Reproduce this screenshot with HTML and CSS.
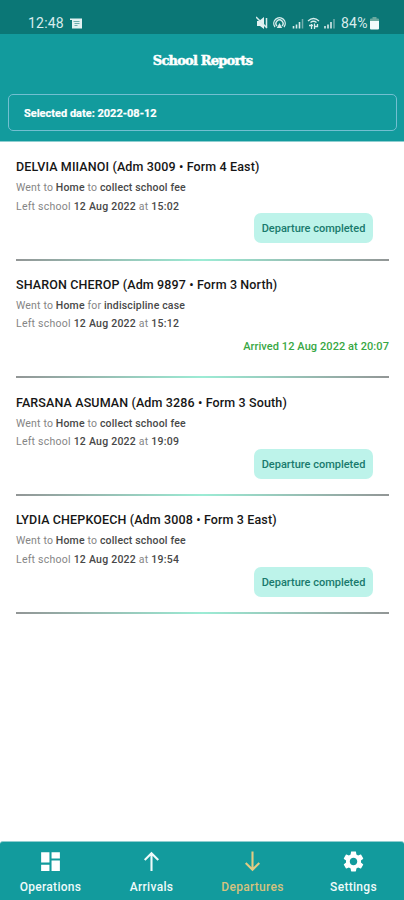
FILE: index.html
```html
<!DOCTYPE html>
<html lang="en">
<head>
<meta charset="utf-8">
<title>School Reports</title>
<link rel="stylesheet" href="styles.css">
</head>
<body>
<div class="app">
  <div class="status">
    <span class="time">12:48</span>
    <svg class="note" viewBox="0 0 12 11"><path d="M0 .5h12V10.500H2V2H0z" fill="#e3f1f1"/><path d="M3.500 3.500h6M4.500 5.500h5M4.500 7.500h3" stroke="#5fa5a5" stroke-width=".9"/></svg>
    <span class="grow"></span>
    <svg class="tray" viewBox="0 0 80 14" fill="none" stroke="#d8ecec">
      <path d="M1 5h2l5-4v12L4 10H1z" fill="#e3f1f1" stroke="none"/><path d="M0 1l11 11M10.500 2v10" stroke-width="1.5"/>
      <path d="M19 11a5.700 5.700 0 1 1 9 0M21 10a3.500 3.500 0 1 1 5 0" stroke-width="1.4"/><path d="M23.500 7l2.700 5h-5.400z" fill="#d8ecec" stroke="none"/>
      <path d="M37.500 10v2.500M40.500 8.500v4M43.500 6v6.500" stroke-width="1.6"/><path d="M46.500 3v9.500" stroke="#72adad" stroke-width="1.5"/>
      <path d="M52 5q5.500-5 11 0M54.500 6.500q3-2.500 6 0M53 9.500h4M55.500 8v5M58.500 7.500v5.500M61.500 8v2.500h-3" stroke-width="1.3"/>
      <path d="M69 10v2.500M72 8.500v4M75 6v6.500" stroke-width="1.6"/><path d="M78 3v9.500" stroke="#72adad" stroke-width="1.5"/>
    </svg>
    <span class="percent">84%</span>
    <svg class="battery" viewBox="0 0 9 13"><path d="M2.500 0h4v1.500H8a1 1 0 0 1 1 1V4H0V2.500a1 1 0 0 1 1-1h1.500z" fill="#6aa99f"/><path d="M0 4h9v7.500a1 1 0 0 1-1 1H1a1 1 0 0 1-1-1z" fill="#f2fafa"/></svg>
  </div>
  <header class="header">
    <h1 class="title">School Reports</h1>
    <div class="date">Selected date: 2022-08-12</div>
  </header>
  <main class="list">
    <article class="item">
      <h2 class="name">DELVIA MIIANOI (Adm 3009 • Form 4 East)</h2>
      <p class="line">Went to <b>Home</b> to <b>collect school fee</b></p>
      <p class="line left">Left school <b>12 Aug 2022</b> at <b>15:02</b></p>
      <span class="chip">Departure completed</span>
    </article>
    <article class="item">
      <h2 class="name">SHARON CHEROP (Adm 9897 • Form 3 North)</h2>
      <p class="line">Went to <b>Home</b> for <b>indiscipline case</b></p>
      <p class="line left">Left school <b>12 Aug 2022</b> at <b>15:12</b></p>
      <span class="arrived">Arrived 12 Aug 2022 at 20:07</span>
    </article>
    <article class="item">
      <h2 class="name">FARSANA ASUMAN (Adm 3286 • Form 3 South)</h2>
      <p class="line">Went to <b>Home</b> to <b>collect school fee</b></p>
      <p class="line left">Left school <b>12 Aug 2022</b> at <b>19:09</b></p>
      <span class="chip">Departure completed</span>
    </article>
    <article class="item">
      <h2 class="name">LYDIA CHEPKOECH (Adm 3008 • Form 3 East)</h2>
      <p class="line">Went to <b>Home</b> to <b>collect school fee</b></p>
      <p class="line left">Left school <b>12 Aug 2022</b> at <b>19:54</b></p>
      <span class="chip">Departure completed</span>
    </article>
  </main>
  <nav class="nav">
    <a class="tab"><svg viewBox="0 0 24 24"><path d="M3 13h8V3H3v10zm0 8h8v-6H3v6zm10 0h8V11h-8v10zm0-18v6h8V3h-8z"/></svg><span>Operations</span></a>
    <a class="tab"><svg viewBox="0 0 24 24"><path d="M12 21V4M5.500 10.500L12 4l6.500 6.500" class="arrow"/></svg><span>Arrivals</span></a>
    <a class="tab active"><svg viewBox="0 0 24 24"><path d="M12 2.500V20M5.500 13.500L12 20l6.500-6.500" class="arrow"/></svg><span>Departures</span></a>
    <a class="tab"><svg viewBox="0 0 24 24"><path d="M19.140 12.940c.04-.3.06-.61.06-.94 0-.32-.02-.64-.07-.94l2.030-1.580c.18-.14.23-.41.12-.61l-1.920-3.320c-.12-.22-.37-.29-.59-.22l-2.390.96c-.5-.38-1.030-.7-1.620-.94l-.36-2.540c-.04-.24-.24-.41-.48-.41h-3.840c-.24 0-.43.17-.47.41l-.36 2.540c-.59.24-1.130.57-1.620.94l-2.390-.96c-.22-.08-.47 0-.59.22L2.740 8.870c-.12.21-.08.47.12.61l2.030 1.580c-.05.3-.09.63-.09.94s.02.64.07.94l-2.030 1.580c-.18.14-.23.41-.12.61l1.920 3.320c.12.22.37.29.59.22l2.390-.96c.5.38 1.030.7 1.620.94l.36 2.540c.05.24.24.41.48.41h3.840c.24 0 .44-.17.47-.41l.36-2.540c.59-.24 1.130-.56 1.620-.94l2.390.96c.22.08.47 0 .59-.22l1.920-3.320c.12-.22.07-.47-.12-.61l-2.010-1.580zM12 15.600c-1.980 0-3.600-1.620-3.600-3.600s1.620-3.600 3.600-3.600 3.600 1.620 3.600 3.600-1.620 3.600-3.600 3.600z"/></svg><span>Settings</span></a>
  </nav>
</div>
</body>
</html>
```
FILE: styles.css
```css
* { box-sizing: border-box; margin: 0; }
body { background: #fff; font-family: Roboto, "Liberation Sans", sans-serif; }
.app { width: 404px; height: 900px; display: flex; flex-direction: column; overflow: hidden; }
.status { height: 34px; background: #0b7776; color: #d8ecec; display: flex; align-items: center; padding: 12px 25px 0 28px; flex: none; }
.time { font-size: 14px; line-height: 20px; letter-spacing: .2px; }
.note { width: 12px; height: 11px; margin-left: 6px; }
.grow { flex: 1; }
.tray { width: 80px; height: 14px; margin-right: 5px; }
.percent { font-size: 14px; line-height: 20px; width: 28px; letter-spacing: .2px; }
.battery { width: 9px; height: 13px; margin-left: 1px; margin-top: 1px; }
.header { height: 108px; flex: none; background: #129b9d; border-bottom: 1px solid #8fced0; padding: 17px 7px 0 8px; color: #fff; }
.title { font: bold 13px/20px "DejaVu Serif", serif; letter-spacing: -.8px; text-align: center; -webkit-text-stroke: .5px #fff; }
.date { margin-top: 23px; height: 37px; border: 1.5px solid #72bfd1; border-radius: 5px; padding-left: 15px; font-size: 11px; font-weight: 700; line-height: 37px; -webkit-text-stroke: .2px #fff; }
.list { flex: 1; padding: .75px 15px 0 16px; }
.item { height: 117.75px; padding-top: 14.4px; display: flex; flex-direction: column; }
.item::after { content: ""; height: 2px; margin-top: auto; background: linear-gradient(90deg, #929696, #9cecd5 50%, #929696); }
.name { font-size: 12.5px; line-height: 20px; font-weight: 500; letter-spacing: .13px; color: #161616; white-space: nowrap; }
.line { font-size: 10.5px; line-height: 18.7px; letter-spacing: .17px; color: #858585; white-space: nowrap; }
.name + .line { margin-top: 1.9px; }
.left { letter-spacing: .24px; }
.line b { font-weight: 500; color: #484848; }
.chip { align-self: flex-end; margin-right: 16px; margin-top: -3.2px; width: 119px; height: 30px; border-radius: 7px; background: #bdf3ea; color: #197a6d; font-size: 11px; font-weight: 500; line-height: 31px; text-align: center; white-space: nowrap; }
.arrived { align-self: flex-end; color: #38a744; font-size: 11px; font-weight: 500; letter-spacing: .08px; line-height: 20px; margin-top: 2.7px; white-space: nowrap; }
.nav { height: 59px; flex: none; background: #129b9d; border-top: 1px solid #8fced0; border-radius: 3px 3px 0 0; display: grid; grid-template-columns: repeat(4, 1fr); color: #eefafa; }
.tab { display: flex; flex-direction: column; align-items: center; padding-top: 7px; font-size: 12px; font-weight: 500; line-height: 16px; letter-spacing: .3px; }
.tab svg { width: 25px; height: 25px; margin-bottom: 5px; fill: #fff; }
.tab .arrow { fill: none; stroke: #eefafa; stroke-width: 2; }
.active { color: #d6c27f; }
.tab.active .arrow { stroke: #e2cb83; }
```
